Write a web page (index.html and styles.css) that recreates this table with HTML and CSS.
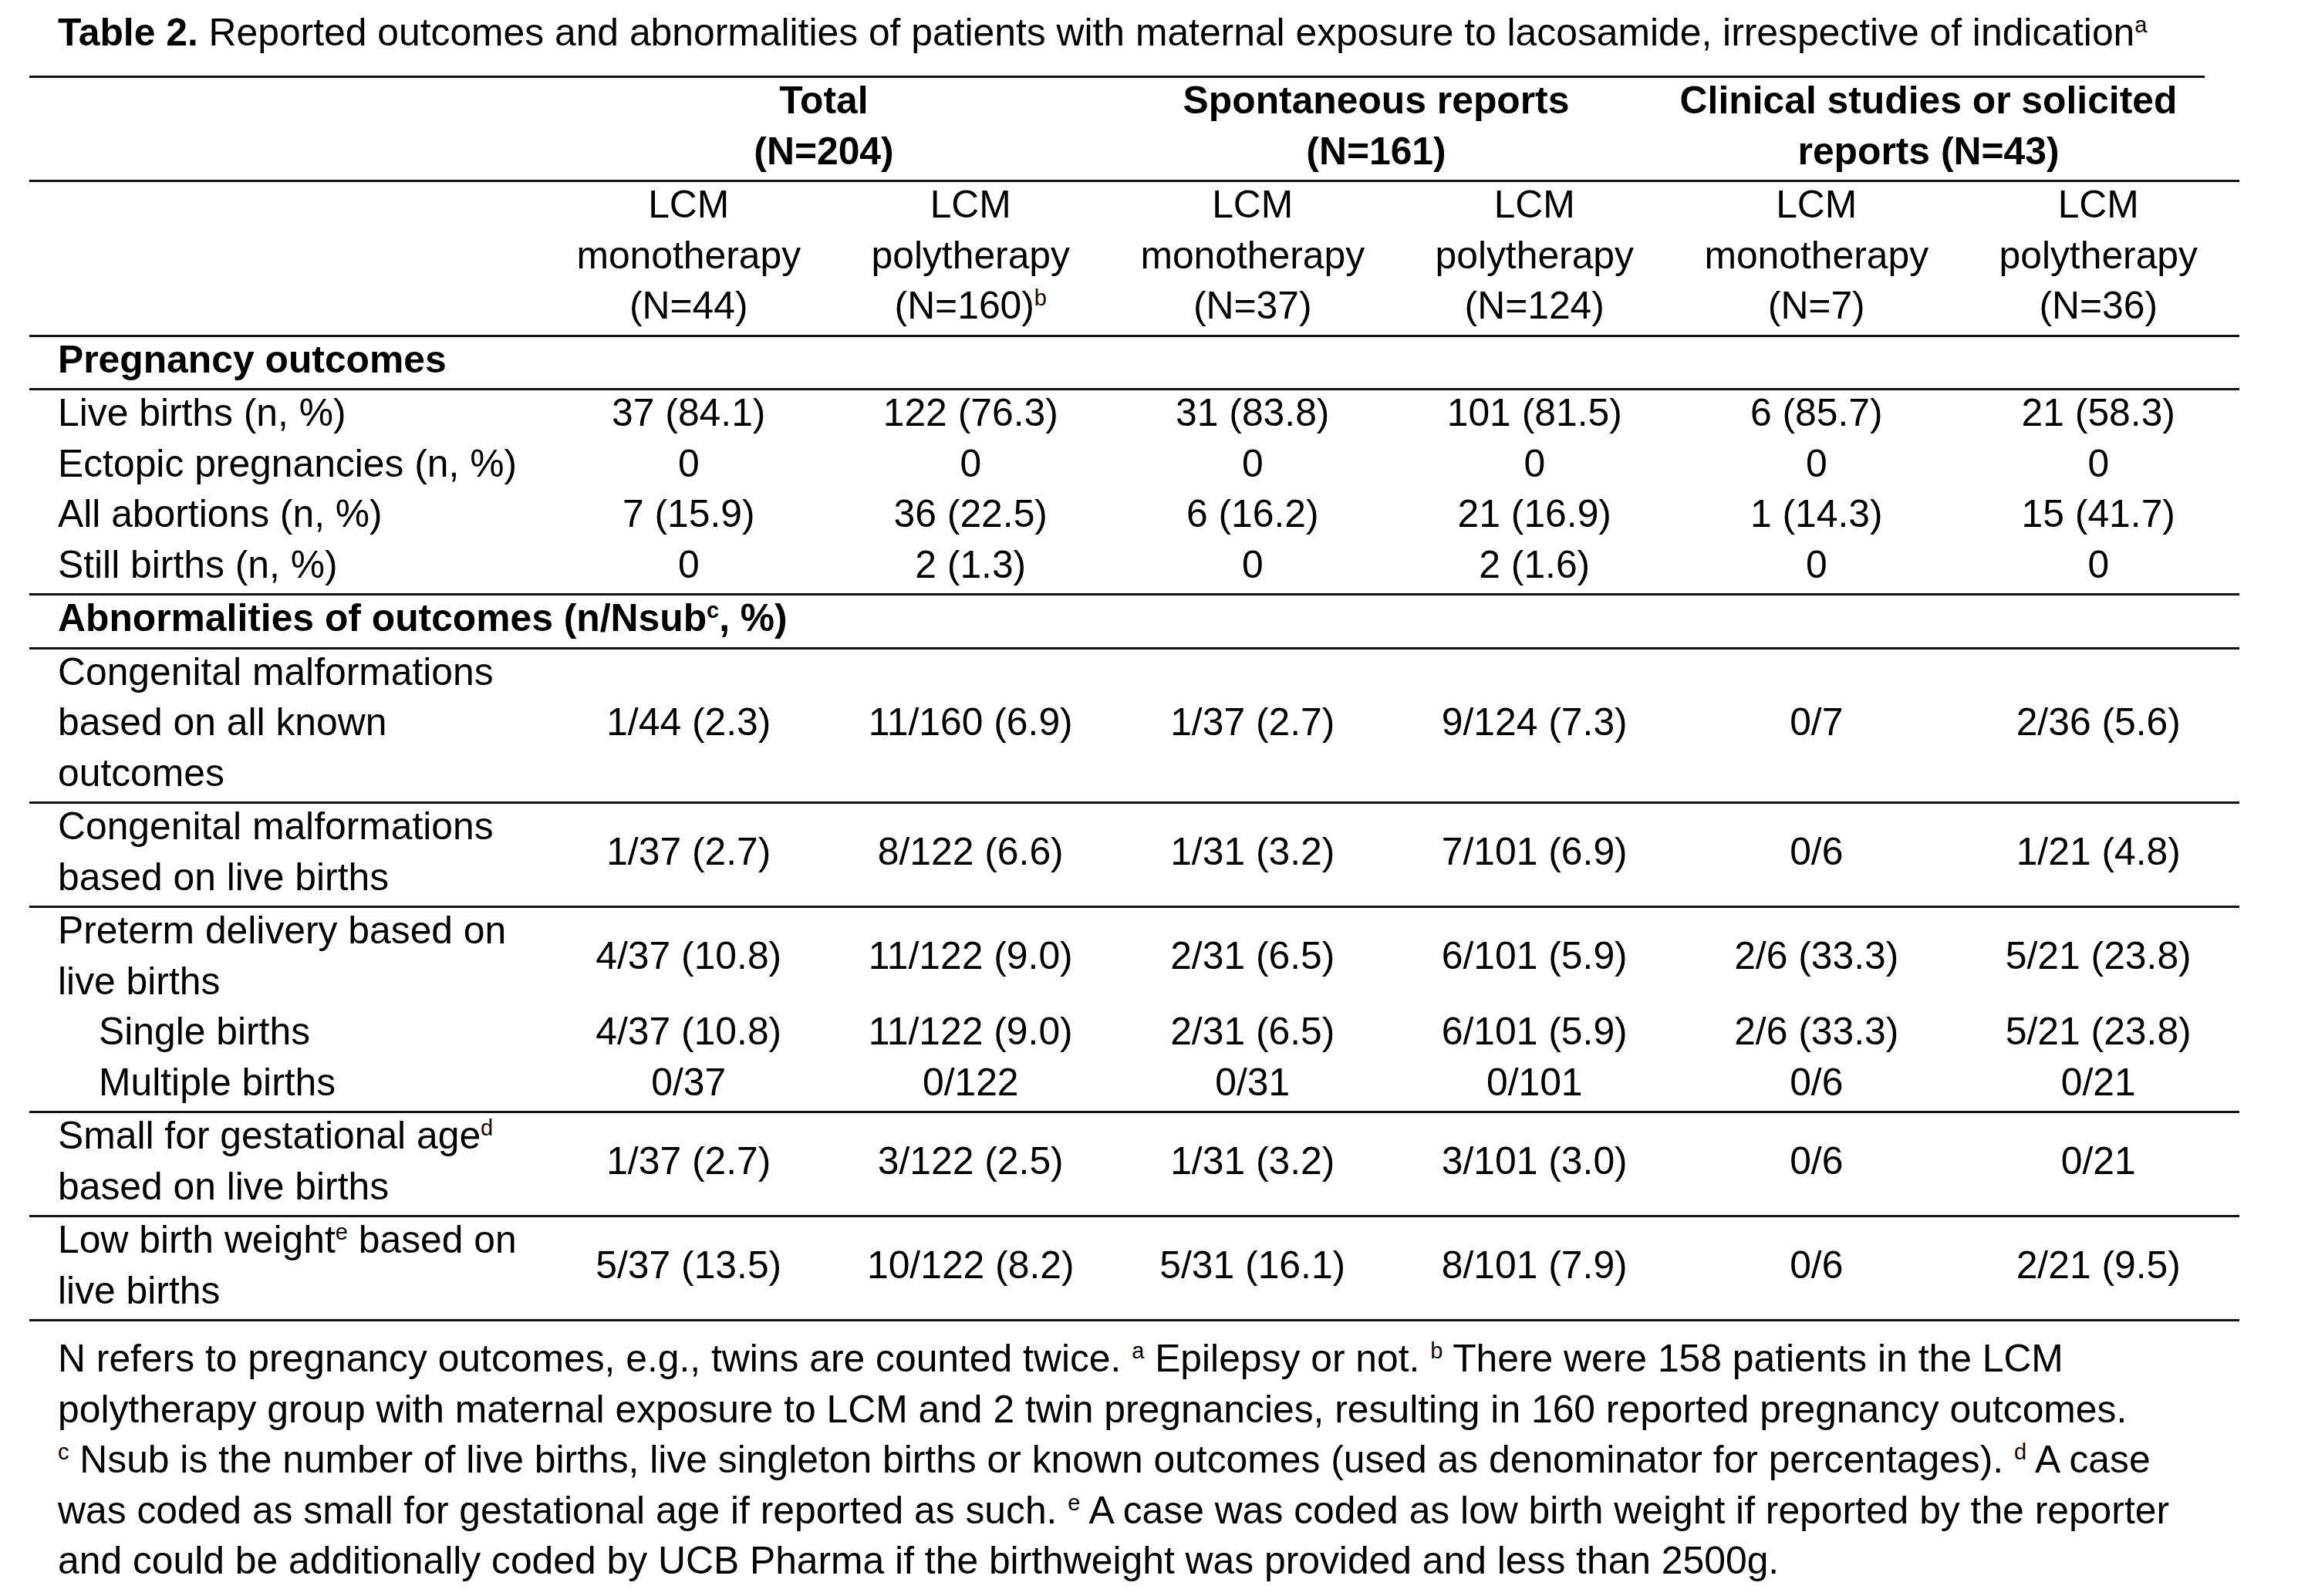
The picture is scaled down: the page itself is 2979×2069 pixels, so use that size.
FILE: index.html
```html
<!DOCTYPE html>
<html lang="en">
<head>
<meta charset="utf-8">
<title>Table 2</title>
<link rel="stylesheet" href="styles.css">
</head>
<body>
<div class="page">
  <p class="caption"><b>Table 2.</b> Reported outcomes and abnormalities of patients with maternal exposure to lacosamide, irrespective of indication<sup>a</sup></p>

  <div class="groups">
    <div></div>
    <div class="t">Total<br>(N=204)</div>
    <div class="t">Spontaneous reports<br>(N=161)</div>
    <div class="t">Clinical studies or solicited<br>reports (N=43)</div>
  </div>

  <table class="data">
    <colgroup>
      <col class="c-label">
      <col class="c-num"><col class="c-num"><col class="c-num">
      <col class="c-num"><col class="c-num"><col class="c-num">
    </colgroup>
    <tbody>
      <tr class="ruled">
        <td></td>
        <td><div class="t">LCM<br>monotherapy<br>(N=44)</div></td>
        <td><div class="t">LCM<br>polytherapy<br>(N=160)<sup>b</sup></div></td>
        <td><div class="t">LCM<br>monotherapy<br>(N=37)</div></td>
        <td><div class="t">LCM<br>polytherapy<br>(N=124)</div></td>
        <td><div class="t">LCM<br>monotherapy<br>(N=7)</div></td>
        <td><div class="t">LCM<br>polytherapy<br>(N=36)</div></td>
      </tr>

      <tr class="ruled section">
        <td colspan="7" class="lbl"><div class="t">Pregnancy outcomes</div></td>
      </tr>
      <tr class="ruled">
        <td class="lbl"><div class="t">Live births (n, %)</div></td>
        <td><div class="t">37 (84.1)</div></td>
        <td><div class="t">122 (76.3)</div></td>
        <td><div class="t">31 (83.8)</div></td>
        <td><div class="t">101 (81.5)</div></td>
        <td><div class="t">6 (85.7)</div></td>
        <td><div class="t">21 (58.3)</div></td>
      </tr>
      <tr>
        <td class="lbl"><div class="t">Ectopic pregnancies (n, %)</div></td>
        <td><div class="t">0</div></td>
        <td><div class="t">0</div></td>
        <td><div class="t">0</div></td>
        <td><div class="t">0</div></td>
        <td><div class="t">0</div></td>
        <td><div class="t">0</div></td>
      </tr>
      <tr>
        <td class="lbl"><div class="t">All abortions (n, %)</div></td>
        <td><div class="t">7 (15.9)</div></td>
        <td><div class="t">36 (22.5)</div></td>
        <td><div class="t">6 (16.2)</div></td>
        <td><div class="t">21 (16.9)</div></td>
        <td><div class="t">1 (14.3)</div></td>
        <td><div class="t">15 (41.7)</div></td>
      </tr>
      <tr>
        <td class="lbl"><div class="t">Still births (n, %)</div></td>
        <td><div class="t">0</div></td>
        <td><div class="t">2 (1.3)</div></td>
        <td><div class="t">0</div></td>
        <td><div class="t">2 (1.6)</div></td>
        <td><div class="t">0</div></td>
        <td><div class="t">0</div></td>
      </tr>

      <tr class="ruled section">
        <td colspan="7" class="lbl"><div class="t">Abnormalities of outcomes (n/Nsub<sup>c</sup>, %)</div></td>
      </tr>
      <tr class="ruled">
        <td class="lbl"><div class="t">Congenital malformations based on all known outcomes</div></td>
        <td><div class="t">1/44 (2.3)</div></td>
        <td><div class="t">11/160 (6.9)</div></td>
        <td><div class="t">1/37 (2.7)</div></td>
        <td><div class="t">9/124 (7.3)</div></td>
        <td><div class="t">0/7</div></td>
        <td><div class="t">2/36 (5.6)</div></td>
      </tr>
      <tr class="ruled">
        <td class="lbl"><div class="t">Congenital malformations based on live births</div></td>
        <td><div class="t">1/37 (2.7)</div></td>
        <td><div class="t">8/122 (6.6)</div></td>
        <td><div class="t">1/31 (3.2)</div></td>
        <td><div class="t">7/101 (6.9)</div></td>
        <td><div class="t">0/6</div></td>
        <td><div class="t">1/21 (4.8)</div></td>
      </tr>
      <tr class="ruled">
        <td class="lbl"><div class="t">Preterm delivery based on live births</div></td>
        <td><div class="t">4/37 (10.8)</div></td>
        <td><div class="t">11/122 (9.0)</div></td>
        <td><div class="t">2/31 (6.5)</div></td>
        <td><div class="t">6/101 (5.9)</div></td>
        <td><div class="t">2/6 (33.3)</div></td>
        <td><div class="t">5/21 (23.8)</div></td>
      </tr>
      <tr>
        <td class="lbl ind"><div class="t">Single births</div></td>
        <td><div class="t">4/37 (10.8)</div></td>
        <td><div class="t">11/122 (9.0)</div></td>
        <td><div class="t">2/31 (6.5)</div></td>
        <td><div class="t">6/101 (5.9)</div></td>
        <td><div class="t">2/6 (33.3)</div></td>
        <td><div class="t">5/21 (23.8)</div></td>
      </tr>
      <tr>
        <td class="lbl ind"><div class="t">Multiple births</div></td>
        <td><div class="t">0/37</div></td>
        <td><div class="t">0/122</div></td>
        <td><div class="t">0/31</div></td>
        <td><div class="t">0/101</div></td>
        <td><div class="t">0/6</div></td>
        <td><div class="t">0/21</div></td>
      </tr>
      <tr class="ruled">
        <td class="lbl"><div class="t">Small for gestational age<sup>d</sup> based on live births</div></td>
        <td><div class="t">1/37 (2.7)</div></td>
        <td><div class="t">3/122 (2.5)</div></td>
        <td><div class="t">1/31 (3.2)</div></td>
        <td><div class="t">3/101 (3.0)</div></td>
        <td><div class="t">0/6</div></td>
        <td><div class="t">0/21</div></td>
      </tr>
      <tr class="ruled">
        <td class="lbl"><div class="t">Low birth weight<sup>e</sup> based on live births</div></td>
        <td><div class="t">5/37 (13.5)</div></td>
        <td><div class="t">10/122 (8.2)</div></td>
        <td><div class="t">5/31 (16.1)</div></td>
        <td><div class="t">8/101 (7.9)</div></td>
        <td><div class="t">0/6</div></td>
        <td><div class="t">2/21 (9.5)</div></td>
      </tr>

      <tr class="ruled foot">
        <td colspan="7"><div class="t">N refers to pregnancy outcomes, e.g., twins are counted twice. <sup>a</sup> Epilepsy or not. <sup>b</sup> There were 158 patients in the LCM<br>polytherapy group with maternal exposure to LCM and 2 twin pregnancies, resulting in 160 reported pregnancy outcomes.<br><sup>c</sup> Nsub is the number of live births, live singleton births or known outcomes (used as denominator for percentages). <sup>d</sup> A case<br>was coded as small for gestational age if reported as such. <sup>e</sup> A case was coded as low birth weight if reported by the reporter<br>and could be additionally coded by UCB Pharma if the birthweight was provided and less than 2500g.</div></td>
      </tr>
    </tbody>
  </table>
</div>
</body>
</html>
```

FILE: styles.css
```css
* {
  box-sizing: border-box;
}

html,
body {
  margin: 0;
  background: #ffffff;
}

body {
  font-family: "Liberation Sans", Arial, sans-serif;
  font-size: 49.8px;
  line-height: 65.5px;
  color: #000000;
}

.page {
  width: 2979px;
  padding: 10px 0 0 38px;
}

.caption {
  margin: 0 0 22.5px 37px;
}

/* text sits high in its line, extra leading below */
.t {
  margin: -4px 0 4px;
}

.groups {
  display: grid;
  grid-template-columns: 672px repeat(3, 716px);
  width: 2820px;
  border-top: 3px solid #111111;
  padding-top: 1px;
  font-weight: bold;
  text-align: center;
}

.data {
  width: 2865px;
  table-layout: fixed;
  border-collapse: separate;
  border-spacing: 0;
}

.c-label {
  width: 672px;
}

.c-num {
  width: 365.5px;
}

.data td {
  padding: 0 8px;
  text-align: center;
  vertical-align: middle;
}

.data tr.ruled > td {
  border-top: 3px solid #111111;
  padding-top: 1px;
}

.data td.lbl {
  text-align: left;
  padding-left: 37px;
  padding-right: 15px;
}

.data td.ind {
  padding-left: 90px;
}

.section td {
  font-weight: bold;
}

.data tr.foot > td {
  text-align: left;
  padding: 20px 37px 0 37px;
}

sup {
  font-size: 0.58em;
  line-height: 0;
  vertical-align: 0.6em;
}
```
